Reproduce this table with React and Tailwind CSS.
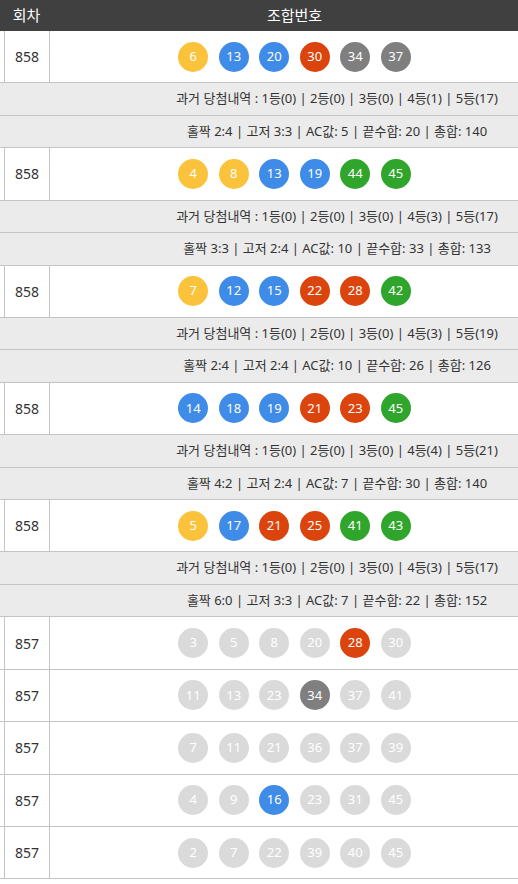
import React from "react";

const font = { fontFamily: '"Noto Sans", "Noto Sans CJK KR", sans-serif' };

function ballClass(n) {
  if (n <= 10) return "bg-[#fbc33c]";
  if (n <= 20) return "bg-[#3f8be8]";
  if (n <= 30) return "bg-[#db440c]";
  if (n <= 40) return "bg-[#7f7f7f]";
  return "bg-[#2fa52b]";
}

function Ball({ n, dim }) {
  return (
    <div
      className={`w-[30px] h-[30px] rounded-full flex items-center justify-center text-[13px] text-white ${dim ? "bg-[#dadada]" : ballClass(n)}`}
    >
      {n}
    </div>
  );
}

function DataRow({ round, nums, hl }) {
  return (
    <div className="flex h-[52.4px] border-b border-[#c4c4c4] bg-white">
      <div className="w-[4px]" />
      <div className="w-[46px] border-l border-r border-[#c4c4c4] flex items-center justify-center text-[14px] text-[#333]">
        {round}
      </div>
      <div className="w-[489px] flex items-center justify-center gap-[10.5px]">
        {nums.map((n, i) => (
          <Ball key={i} n={n} dim={hl ? !hl.includes(n) : false} />
        ))}
      </div>
      <div className="flex-1" />
    </div>
  );
}

function InfoRow({ children }) {
  return (
    <div className="flex h-[32.45px] items-center justify-center border-b border-[#c4c4c4] bg-[#ebebeb] text-[13px] text-[#333]">
      {children}
    </div>
  );
}

const groups = [
  { nums: [6, 13, 20, 30, 34, 37], w: "1등(0) | 2등(0) | 3등(0) | 4등(1) | 5등(17)", s: "홀짝 2:4 | 고저 3:3 | AC값: 5 | 끝수합: 20 | 총합: 140" },
  { nums: [4, 8, 13, 19, 44, 45], w: "1등(0) | 2등(0) | 3등(0) | 4등(3) | 5등(17)", s: "홀짝 3:3 | 고저 2:4 | AC값: 10 | 끝수합: 33 | 총합: 133" },
  { nums: [7, 12, 15, 22, 28, 42], w: "1등(0) | 2등(0) | 3등(0) | 4등(3) | 5등(19)", s: "홀짝 2:4 | 고저 2:4 | AC값: 10 | 끝수합: 26 | 총합: 126" },
  { nums: [14, 18, 19, 21, 23, 45], w: "1등(0) | 2등(0) | 3등(0) | 4등(4) | 5등(21)", s: "홀짝 4:2 | 고저 2:4 | AC값: 7 | 끝수합: 30 | 총합: 140" },
  { nums: [5, 17, 21, 25, 41, 43], w: "1등(0) | 2등(0) | 3등(0) | 4등(3) | 5등(17)", s: "홀짝 6:0 | 고저 3:3 | AC값: 7 | 끝수합: 22 | 총합: 152" },
];

const past = [
  { nums: [3, 5, 8, 20, 28, 30], hl: [28] },
  { nums: [11, 13, 23, 34, 37, 41], hl: [34] },
  { nums: [7, 11, 21, 36, 37, 39], hl: [] },
  { nums: [4, 9, 16, 23, 31, 45], hl: [16] },
  { nums: [2, 7, 22, 39, 40, 45], hl: [] },
];

export default function App() {
  return (
    <div className="w-[518px] h-[884px] overflow-hidden bg-white" style={font}>
      <div className="w-[674px]">
        <div className="flex h-[31px] bg-[#404040] text-white text-[15px] items-center">
          <div className="w-[50px] flex justify-center pl-[3px]">회차</div>
          <div className="w-[489px] flex justify-center">조합번호</div>
          <div className="flex-1" />
        </div>
        {groups.map((g, i) => (
          <div key={i}>
            <DataRow round="858" nums={g.nums} />
            <InfoRow>과거 당첨내역 : {g.w}</InfoRow>
            <InfoRow>{g.s}</InfoRow>
          </div>
        ))}
        {past.map((p, i) => (
          <DataRow key={i} round="857" nums={p.nums} hl={p.hl} />
        ))}
      </div>
    </div>
  );
}
